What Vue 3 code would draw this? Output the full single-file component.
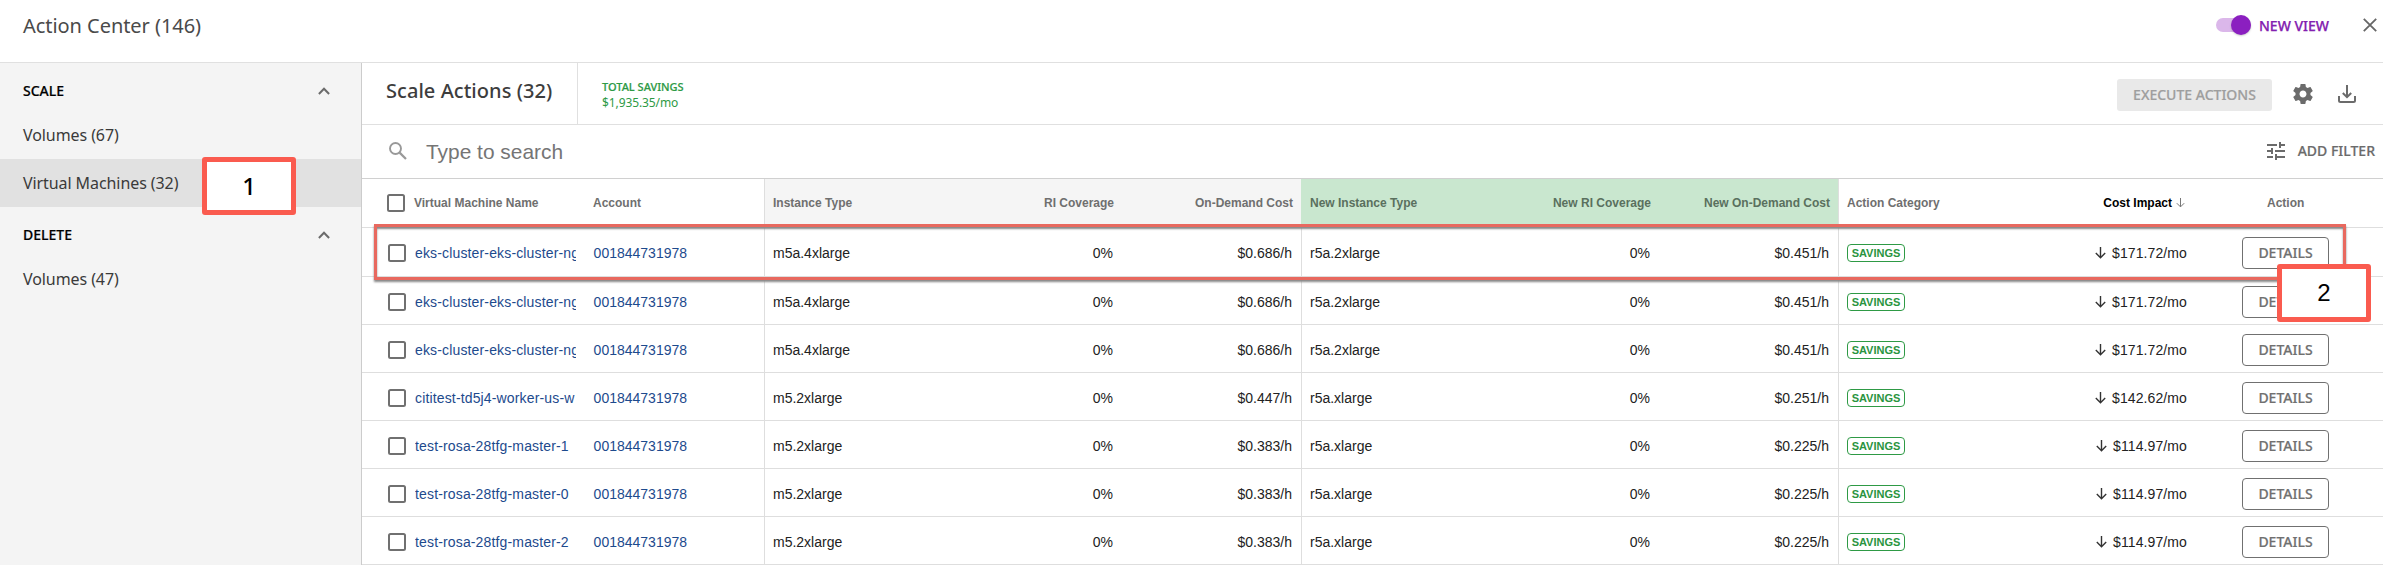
<script setup>
const rows = [
  ['eks-cluster-eks-cluster-ng', 'm5a.4xlarge', '$0.686/h', 'r5a.2xlarge', '$0.451/h', '$171.72/mo'],
  ['eks-cluster-eks-cluster-ng', 'm5a.4xlarge', '$0.686/h', 'r5a.2xlarge', '$0.451/h', '$171.72/mo'],
  ['eks-cluster-eks-cluster-ng', 'm5a.4xlarge', '$0.686/h', 'r5a.2xlarge', '$0.451/h', '$171.72/mo'],
  ['cititest-td5j4-worker-us-w', 'm5.2xlarge', '$0.447/h', 'r5a.xlarge', '$0.251/h', '$142.62/mo'],
  ['test-rosa-28tfg-master-1', 'm5.2xlarge', '$0.383/h', 'r5a.xlarge', '$0.225/h', '$114.97/mo'],
  ['test-rosa-28tfg-master-0', 'm5.2xlarge', '$0.383/h', 'r5a.xlarge', '$0.225/h', '$114.97/mo'],
  ['test-rosa-28tfg-master-2', 'm5.2xlarge', '$0.383/h', 'r5a.xlarge', '$0.225/h', '$114.97/mo'],
]
const groups = [
  { title: 'SCALE', items: [{ label: 'Volumes (67)' }, { label: 'Virtual Machines (32)', active: true }] },
  { title: 'DELETE', items: [{ label: 'Volumes (47)' }] },
]
</script>

<template>
  <div class="app">
    <header class="top">
      <span class="top-title">Action Center (146)</span>
      <span class="toggle"><span class="knob"></span></span>
      <span class="new-view">NEW VIEW</span>
      <svg class="close" width="14" height="14" viewBox="0 0 14 14"><path d="M.8.8 13.2 13.2M13.2.8.8 13.2" fill="none" stroke="#666" stroke-width="1.8" /></svg>
    </header>
    <div class="body">
      <aside class="side">
        <section v-for="g in groups" :key="g.title">
          <div class="group">
            <span>{{ g.title }}</span>
            <svg width="12" height="8" viewBox="0 0 12 8"><path d="M.9 7 6 1.8 11.1 7" fill="none" stroke="#6b6b6b" stroke-width="2" /></svg>
          </div>
          <div v-for="i in g.items" :key="i.label" class="item" :class="{ active: i.active }">{{ i.label }}</div>
        </section>
      </aside>
      <main class="main">
        <div class="bar">
          <h1 class="title">Scale Actions (32)</h1>
          <div class="savings"><b>TOTAL SAVINGS</b><span>$1,935.35/mo</span></div>
          <div class="exec">EXECUTE ACTIONS</div>
          <svg class="gear" width="24" height="24" viewBox="0 0 24 24"><path fill="#6b6b6b" d="M19.43 12.98c.04-.32.07-.64.07-.98s-.03-.66-.07-.98l2.11-1.65c.19-.15.24-.42.12-.64l-2-3.46c-.12-.22-.39-.3-.61-.22l-2.49 1c-.52-.4-1.08-.73-1.69-.98l-.38-2.65C14.46 2.18 14.25 2 14 2h-4c-.25 0-.46.18-.49.42l-.38 2.65c-.61.25-1.17.59-1.69.98l-2.49-1c-.23-.09-.49 0-.61.22l-2 3.46c-.13.22-.07.49.12.64l2.11 1.65c-.04.32-.07.65-.07.98s.03.66.07.98l-2.11 1.65c-.19.15-.24.42-.12.64l2 3.46c.12.22.39.3.61.22l2.49-1c.52.4 1.08.73 1.69.98l.38 2.65c.03.24.24.42.49.42h4c.25 0 .46-.18.49-.42l.38-2.65c.61-.25 1.17-.59 1.69-.98l2.49 1c.23.09.49 0 .61-.22l2-3.46c.12-.22.07-.49-.12-.64l-2.11-1.65zM12 15.5c-1.93 0-3.5-1.57-3.5-3.5s1.57-3.5 3.5-3.5 3.5 1.57 3.5 3.5-1.57 3.5-3.5 3.5z" /></svg>
          <svg class="download" width="18" height="18" viewBox="0 0 18 18"><path d="M1 11v4.500q0 1.500 1.500 1.500h13q1.500 0 1.500-1.500V11M9 0v12M4.800 8 9 12.200 13.200 8" fill="none" stroke="#6b6b6b" stroke-width="2" /></svg>
        </div>
        <div class="search">
          <svg width="18" height="18" viewBox="0 0 18 18"><circle cx="6.500" cy="6.500" r="5.500" fill="none" stroke="#999" stroke-width="1.900" /><path d="m10.600 10.600 6.400 6.400" stroke="#999" stroke-width="2.200" /></svg>
          <span class="placeholder">Type to search</span>
          <svg class="tune" width="18" height="18" viewBox="3 3 18 18"><path fill="#6b6b6b" d="M3 17v2h6v-2H3zM3 5v2h10V5H3zm10 16v-2h8v-2h-8v-2h-2v6h2zM7 9v2H3v2h4v2h2V9H7zm14 4v-2H11v2h10zm-6-4h2V7h4V5h-4V3h-2v6z" /></svg>
          <span class="add-filter">ADD FILTER</span>
        </div>
        <div class="table">
          <div class="row head">
            <div class="c check"><i class="box"></i></div>
            <div class="c name">Virtual Machine Name</div>
            <div class="c">Account</div>
            <div class="c line grey">Instance Type</div>
            <div class="c right grey">RI Coverage</div>
            <div class="c right grey">On-Demand Cost</div>
            <div class="c line green">New Instance Type</div>
            <div class="c right green">New RI Coverage</div>
            <div class="c right green">New On-Demand Cost</div>
            <div class="c line cat">Action Category</div>
            <div class="c right sorted">Cost Impact<svg width="9" height="10" viewBox="0 0 9 10"><path d="M4.500 0v8.800M.8 5.200l3.700 3.700 3.700-3.700" fill="none" stroke="#777" /></svg></div>
            <div class="c action">Action</div>
          </div>
          <div v-for="(r, n) in rows" :key="n" class="row data">
            <div class="c check"><i class="box"></i></div>
            <div class="c name"><span class="clip link">{{ r[0] }}</span></div>
            <div class="c link account">001844731978</div>
            <div class="c line">{{ r[1] }}</div>
            <div class="c right">0%</div>
            <div class="c right">{{ r[2] }}</div>
            <div class="c line">{{ r[3] }}</div>
            <div class="c right">0%</div>
            <div class="c right">{{ r[4] }}</div>
            <div class="c line cat"><span class="badge">SAVINGS</span></div>
            <div class="c right cost"><svg width="11" height="12" viewBox="0 0 11 12"><path d="M5.500 0v10.500M.8 6l4.700 4.700L10.200 6" fill="none" stroke="#333" stroke-width="1.400" /></svg>{{ r[5] }}</div>
            <div class="c action"><span class="details">DETAILS</span></div>
          </div>
        </div>
      </main>
    </div>
    <div class="highlight"></div>
    <div class="callout one">1</div>
    <div class="callout two">2</div>
  </div>
</template>

<style>
body { margin: 0; overflow: hidden; }
</style>

<style scoped>
* { box-sizing: border-box; }
.app { position: relative; width: 2383px; height: 565px; overflow: hidden; background: #fff; color: #222; font-family: "Liberation Sans", Arial, sans-serif; font-size: 14px; display: flex; flex-direction: column; }
.top { height: 63px; flex: none; border-bottom: 1px solid #e0e0e0; display: flex; align-items: center; padding: 0 6px 12px 23px; font-family: "Noto Sans", sans-serif; }
.top-title { font-size: 20px; letter-spacing: -.05px; color: #4a4a4a; flex: 1; padding-top: 1px; }
.toggle { width: 35px; height: 14px; border-radius: 7px; background: #dbb7ea; display: flex; align-items: center; justify-content: flex-end; margin-right: 8px; }
.knob { width: 20px; height: 20px; flex: none; border-radius: 50%; background: #8b1fc0; box-shadow: 0 1px 2px rgba(0, 0, 0, .2); }
.new-view { font-size: 14px; font-weight: 500; color: #8320b0; margin-right: 34px; -webkit-text-stroke: .25px; }
.body { flex: 1; display: flex; min-height: 0; }
.side { width: 361px; flex: none; background: #f4f4f4; font-family: "Noto Sans", sans-serif; }
.group { height: 48px; padding: 7px 31px 0 23px; display: flex; align-items: center; justify-content: space-between; font-size: 14px; font-weight: 500; color: #000; -webkit-text-stroke: .2px; }
.item { height: 48px; line-height: 49px; padding-left: 23px; font-size: 16px; letter-spacing: -.08px; color: #3a3a3a; }
.active { background: #e1e1e1; }
.main { flex: 1; min-width: 0; border-left: 1px solid #ccc; display: flex; flex-direction: column; }
.bar { height: 62px; flex: none; display: flex; align-items: center; border-bottom: 1px solid #e0e0e0; font-family: "Noto Sans", sans-serif; padding-right: 27px; }
.title { margin: 0; width: 216px; height: 61px; line-height: 56px; padding-left: 24px; font-size: 20px; font-weight: 500; letter-spacing: .05px; color: #3d3d3d; border-right: 1px solid #e0e0e0; white-space: nowrap; }
.savings { flex: 1; margin-left: 24px; padding-top: 2px; display: flex; flex-direction: column; font-size: 12px; line-height: 16px; color: #2e9a45; }
.savings b { font-weight: 500; font-size: 11px; -webkit-text-stroke: .2px; }
.savings span { letter-spacing: -.1px; }
.exec { width: 155px; height: 32px; line-height: 32px; margin: 2px -1px 0 0; border-radius: 3px; background: #e9e9e9; color: #9e9e9e; text-align: center; font-weight: 500; font-size: 14px; -webkit-text-stroke: .2px; }
.gear { margin-left: 20px; }
.download { margin-left: 23px; }
.search { height: 54px; flex: none; display: flex; align-items: center; border-bottom: 1px solid #d0d0d0; padding: 0 8px 2px 27px; }
.placeholder { flex: 1; margin-left: 19px; padding-top: 2px; font-size: 20.900px; color: #757575; }
.tune { margin-right: 13px; }
.add-filter { font-family: "Noto Sans", sans-serif; font-size: 14px; font-weight: 500; color: #6b6b6b; -webkit-text-stroke: .2px; }
.row { display: grid; grid-template-columns: 52px 179px 171px 179px 179px 179px 179px 179px 179px 179px 179px 1fr; height: 48px; border-bottom: 1px solid #dedede; }
.row:nth-child(-n + 2) { height: 49px; }
.c { display: flex; align-items: center; min-width: 0; white-space: nowrap; padding: 0 9px 0 0; }
.check { padding-left: 26px; }
.head .check { padding-left: 25px; }
.box { width: 18px; height: 18px; border: 2px solid #707070; border-radius: 2.500px; flex: none; }
.clip { overflow: hidden; width: 161px; letter-spacing: .15px; }
.name { padding-left: 1px; }
.head .name { padding-left: 0; }
.link { color: #1d4a8d; }
.data .account { padding-left: .6px; }
.line { border-left: 1px solid #dedede; padding-left: 8px; }
.right { justify-content: flex-end; padding: 0 9px 0 0; }
.data .c { padding-top: 3px; }
.data:nth-child(2) .c { padding-top: 2px; }
.head { font-size: 12px; font-weight: 700; color: #6f6f6f; }
.head .right { padding-right: 8px; }
.grey { background: #f5f5f5; }
.green { background: #c9e7cf; border-color: #c9e7cf; color: #5a705e; }
.head .sorted { color: #000; padding-right: 11px; }
.sorted svg { margin-left: 4px; }
.badge { height: 18px; width: 58px; border: 1px solid #2e9a45; border-radius: 4px; color: #2a9440; font-size: 11px; font-weight: 700; line-height: 17px; text-align: center; }
.cost { padding-right: 9px; letter-spacing: .1px; }
.cost svg { margin-right: 6px; }
.action { padding-left: 46px; }
.head .action { padding-left: 71px; }
.details { width: 87px; height: 32px; line-height: 29px; border: 1px solid #707070; border-radius: 4px; text-align: center; color: #707070; font-family: "Noto Sans", sans-serif; font-weight: 500; font-size: 14px; -webkit-text-stroke: .2px; }
.highlight { position: absolute; left: 374px; top: 224px; width: 1972px; height: 56px; border: 3px solid #e8695f; box-shadow: 0 2px 2px #888, inset 0 2px 2px #888; }
.callout { position: absolute; width: 94px; height: 58px; border: 5px solid #fa5b4f; border-radius: 3px; background: #fff; color: #000; font-size: 24px; line-height: 48px; text-align: center; }
.one { left: 202px; top: 157px; font-family: "Noto Sans", sans-serif; font-weight: 500; }
.two { left: 2277px; top: 264px; }
</style>
